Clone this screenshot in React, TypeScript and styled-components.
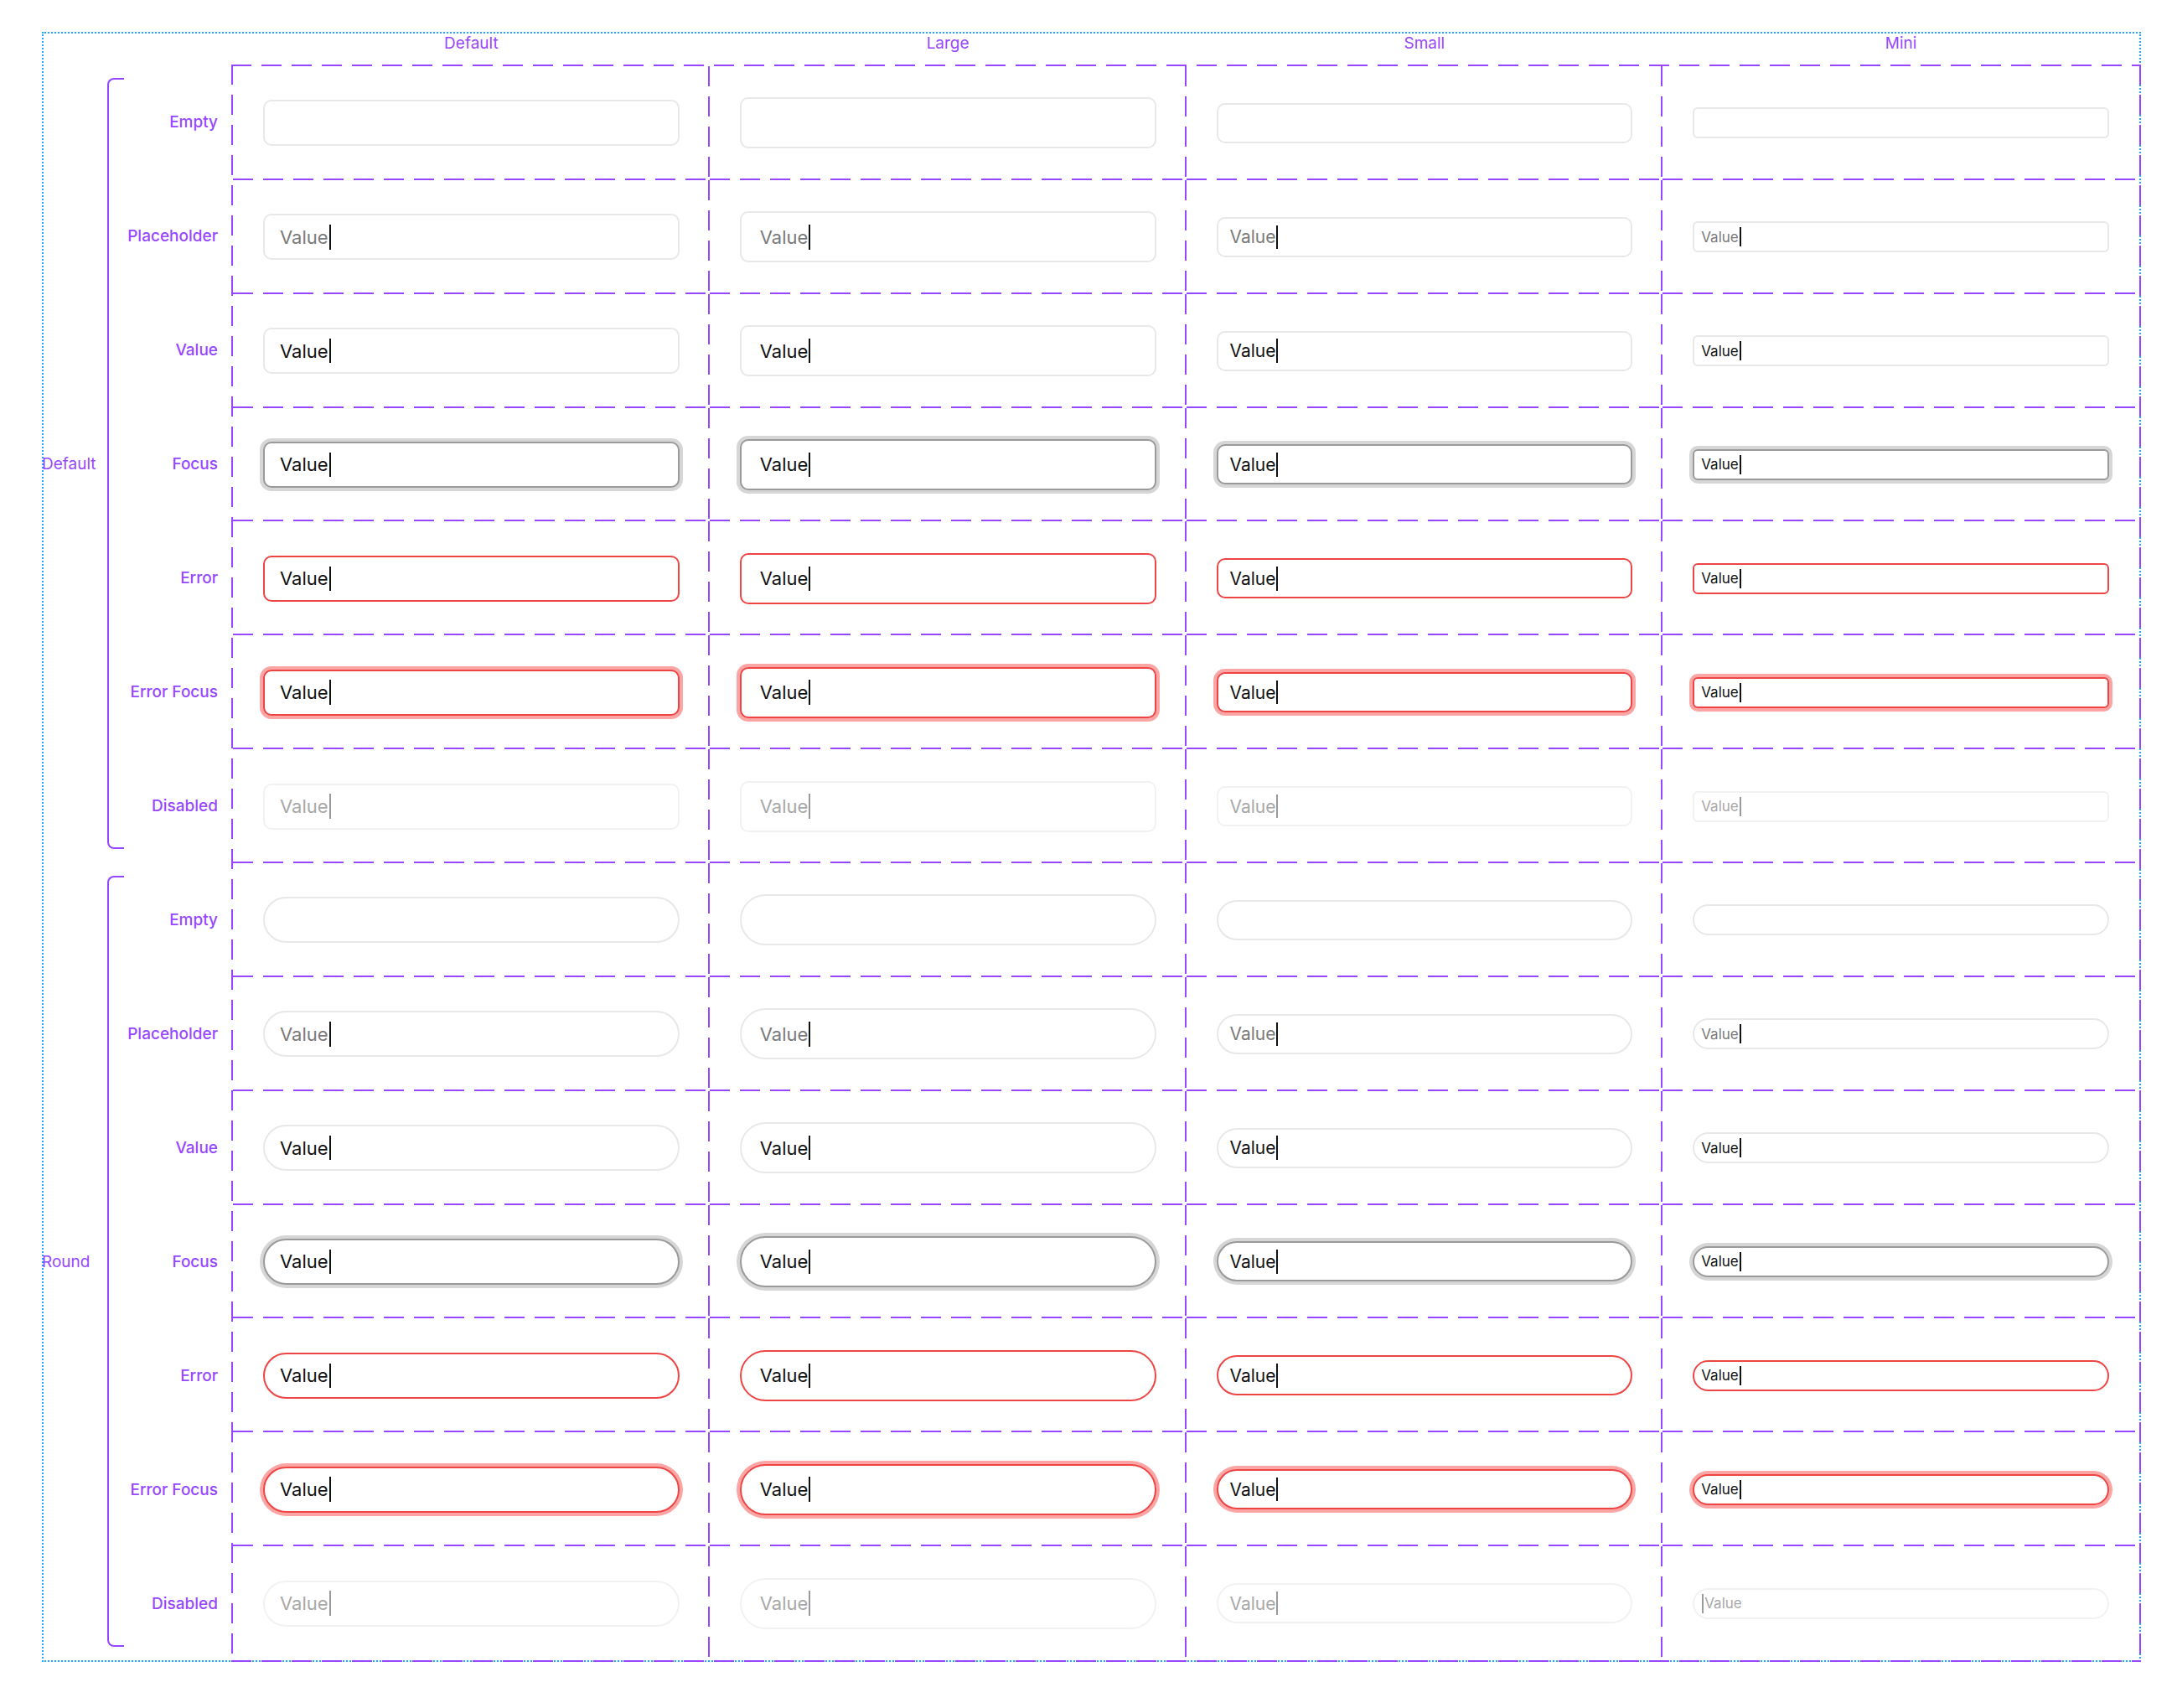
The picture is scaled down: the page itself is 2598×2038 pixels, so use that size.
import React from 'react'
import styled, { createGlobalStyle, css } from 'styled-components'

const Global = createGlobalStyle`
  body { margin: 0; background: #fff; font-family: Inter, "Noto Sans", sans-serif; }
`

const PURPLE = '#9747ff'
const vDash = `repeating-linear-gradient(to bottom, ${PURPLE} 0 24px, transparent 24px 36px)`
const hDash = `repeating-linear-gradient(to right, ${PURPLE} 0 24px, transparent 24px 36px)`

const Page = styled.div`
  width: 2598px;
  height: 2038px;
  padding: 38px 0 0 50px;
  box-sizing: border-box;
`

const Frame = styled.div`
  width: 2505px;
  height: 1945px;
  border: 2px dotted #1ea7fd;
  box-sizing: border-box;
  display: flex;
  flex-direction: column;
`

const HeaderRow = styled.div`
  display: flex;
  height: 38px;
  padding-left: 226px;
`

const ColHead = styled.div`
  flex: 1;
  text-align: center;
  color: ${PURPLE};
  font-size: 19px;
  line-height: 24px;
`

const Body = styled.div`
  display: flex;
  flex: 1;
`

const Side = styled.div`
  width: 226px;
  display: flex;
  flex-direction: column;
  margin-left: -2px;
`

const Group = styled.div`
  display: flex;
  height: 952px;
`

const GroupLabel = styled.div`
  width: 78px;
  display: flex;
  align-items: center;
  color: ${PURPLE};
  font-size: 19px;
`

const Bracket = styled.div`
  width: 20px;
  margin: 16px 0;
  border: 2px solid ${PURPLE};
  border-right: none;
  border-radius: 8px 0 0 8px;
  box-sizing: border-box;
`

const Labels = styled.div`
  flex: 1;
  display: flex;
  flex-direction: column;
`

const RowLabel = styled.div`
  height: 136px;
  display: flex;
  align-items: center;
  justify-content: flex-end;
  padding-right: 16px;
  color: ${PURPLE};
  font-size: 19px;
  font-weight: 500;
`

const Grid = styled.div`
  flex: 1;
  display: grid;
  grid-template-columns: repeat(4, 1fr);
  grid-template-rows: repeat(14, 1fr);
  padding: 2px;
  margin: 0 -2px -2px 0;
  background:
    ${hDash} top / 100% 2px no-repeat,
    ${hDash} bottom / 100% 2px no-repeat,
    ${vDash} left / 2px 100% no-repeat,
    ${vDash} right / 2px 100% no-repeat;
`

const Cell = styled.div<{ $lastCol: boolean; $lastRow: boolean }>`
  display: flex;
  align-items: center;
  padding: 0 36px;
  background: ${p =>
    [
      p.$lastCol ? null : `${vDash} right / 2px 100% no-repeat`,
      p.$lastRow ? null : `${hDash} bottom / 100% 2px no-repeat`,
    ]
      .filter(Boolean)
      .join(', ') || 'none'};
`

type Size = 'default' | 'large' | 'small' | 'mini'
type State = 'empty' | 'placeholder' | 'value' | 'focus' | 'error' | 'errorFocus' | 'disabled'

const dims: Record<Size, { h: number; fs: number; pad: number }> = {
  default: { h: 55, fs: 22, pad: 18 },
  large: { h: 61, fs: 22, pad: 22 },
  small: { h: 48, fs: 21, pad: 14 },
  mini: { h: 37, fs: 17, pad: 8 },
}

const Field = styled.div<{ $size: Size; $state: State; $round: boolean }>`
  width: 100%;
  box-sizing: border-box;
  height: ${p => dims[p.$size].h}px;
  padding: 0 ${p => dims[p.$size].pad}px;
  font-size: ${p => dims[p.$size].fs}px;
  border-radius: ${p => (p.$round ? '999px' : p.$size === 'mini' ? '6px' : '10px')};
  display: flex;
  align-items: center;
  border: 2px solid #e8e8e8;
  color: #111;
  background: #fff;
  ${p => p.$state === 'placeholder' && css`color: #7a7a7a;`}
  ${p => p.$state === 'focus' && css`border-color: #9a9a9a; box-shadow: 0 0 0 4px #d6d6d6;`}
  ${p => p.$state === 'error' && css`border-color: #ef4444;`}
  ${p => p.$state === 'errorFocus' && css`border-color: #ef4444; box-shadow: 0 0 0 4px #fca5a5;`}
  ${p => p.$state === 'disabled' && css`border-color: #f2f2f2; color: #a8a8a8;`}
`

const Caret = styled.span<{ $dim: boolean }>`
  display: inline-block;
  width: 2px;
  height: 1.35em;
  margin: 0 1px;
  background: ${p => (p.$dim ? '#9a9a9a' : '#111')};
`

const states: State[] = ['empty', 'placeholder', 'value', 'focus', 'error', 'errorFocus', 'disabled']
const stateNames = ['Empty', 'Placeholder', 'Value', 'Focus', 'Error', 'Error Focus', 'Disabled']
const sizes: Size[] = ['default', 'large', 'small', 'mini']
const sizeNames = ['Default', 'Large', 'Small', 'Mini']

export default function App() {
  const rows = [false, true].flatMap(round => states.map(state => ({ round, state })))
  return (
    <Page>
      <Global />
      <Frame>
        <HeaderRow>
          {sizeNames.map(n => <ColHead key={n}>{n}</ColHead>)}
        </HeaderRow>
        <Body>
          <Side>
            {['Default', 'Round'].map(g => (
              <Group key={g}>
                <GroupLabel>{g}</GroupLabel>
                <Bracket />
                <Labels>
                  {stateNames.map(s => <RowLabel key={s}>{s}</RowLabel>)}
                </Labels>
              </Group>
            ))}
          </Side>
          <Grid>
            {rows.map((r, ri) =>
              sizes.map((s, ci) => {
                const caretFirst = r.round && r.state === 'disabled' && s === 'mini'
                return (
                  <Cell key={`${ri}-${ci}`} $lastCol={ci === 3} $lastRow={ri === 13}>
                    <Field $size={s} $state={r.state} $round={r.round}>
                      {r.state !== 'empty' && (
                        caretFirst ? (
                          <><Caret $dim />Value</>
                        ) : (
                          <>Value<Caret $dim={r.state === 'disabled'} /></>
                        )
                      )}
                    </Field>
                  </Cell>
                )
              })
            )}
          </Grid>
        </Body>
      </Frame>
    </Page>
  )
}
